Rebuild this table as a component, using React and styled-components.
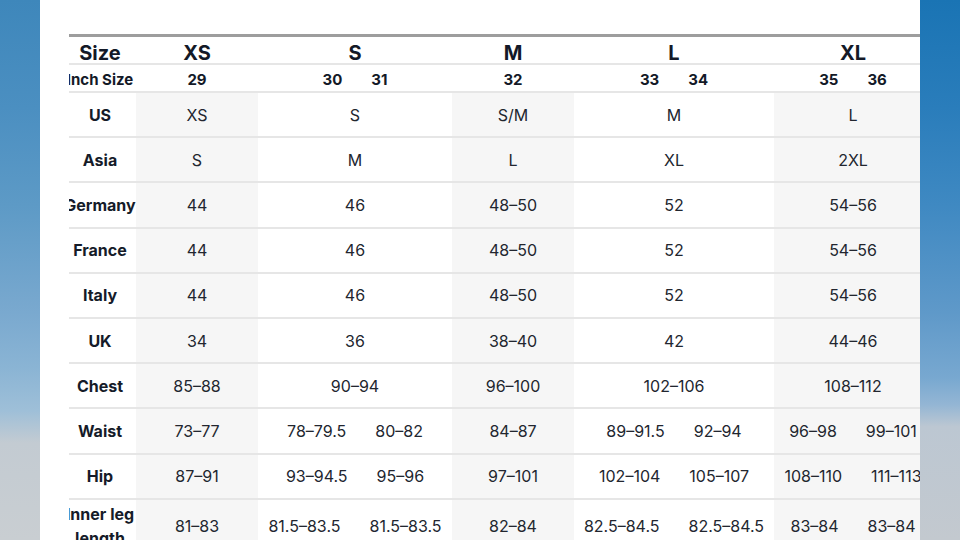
import React from 'react';
import styled, { createGlobalStyle } from 'styled-components';

const Global = createGlobalStyle`
  html, body { margin: 0; padding: 0; }
  body {
    width: 960px;
    height: 540px;
    overflow: hidden;
    font-family: Inter, "Noto Sans", "Liberation Sans", sans-serif;
  }
`;

const Page = styled.div`
  display: flex;
  width: 960px;
  height: 540px;
  overflow: hidden;
`;

const skies = {
  left: `linear-gradient(180deg, #3e87bb 0%, #4b8fc1 20%, #5d9ac6 38%, #7aa9cf 58%, #8ab4d4 68%, #9ebfd8 76%, #c3cbd2 82%, #c9ced2 100%)`,
  right: `linear-gradient(180deg, #1a74b4 0%, #2a7dbb 20%, #3f89c2 38%, #5f99c9 58%, #78a8d0 70%, #94b6d4 75%, #bcc7d2 79%, #c3c9cf 100%)`,
};

const Sky = styled.div`
  flex: 0 0 40px;
  background: ${(p) => skies[p.$side]};
`;

const Panel = styled.div`
  flex: 0 0 880px;
  box-sizing: border-box;
  background: #ffffff;
  padding: 34px 0 0 29px;
  overflow: hidden;
`;

const TableClip = styled.div`
  overflow: hidden;
`;

const Table = styled.div`
  display: grid;
  grid-template-columns: 72px 122px 194px 122px 200px 158px;
  width: max-content;
  margin-left: -5px;
  border-top: 3px solid #9d9d9d;
`;

const Cell = styled.div`
  box-sizing: border-box;
  height: ${(p) => p.$h}px;
  display: flex;
  align-items: center;
  justify-content: center;
  gap: 29px;
  border-bottom: 2px solid #e6e6e6;
  background: ${(p) => (p.$shade ? '#f6f6f6' : '#ffffff')};
  white-space: nowrap;
  text-align: center;
`;

const HeadCell = styled(Cell)`
  padding-top: 6px;
  font-size: 20px;
  font-weight: 700;
  color: #131927;
`;

const InchCell = styled(Cell)`
  padding-top: 2px;
  font-size: 15px;
  font-weight: 700;
  color: #131927;
`;

const LabelCell = styled(Cell)`
  font-size: 16px;
  font-weight: 700;
  color: #151b29;
  white-space: ${(p) => (p.$wrap ? 'normal' : 'nowrap')};
  line-height: 24px;
`;

const ValueCell = styled(Cell)`
  font-size: 16px;
  font-weight: 400;
  color: #22262f;
`;

const headers = ['Size', 'XS', 'S', 'M', 'L', 'XL'];
const inch = [['29'], ['30', '31'], ['32'], ['33', '34'], ['35', '36']];

const rows = [
  { label: 'US', cells: [['XS'], ['S'], ['S/M'], ['M'], ['L']] },
  { label: 'Asia', cells: [['S'], ['M'], ['L'], ['XL'], ['2XL']] },
  { label: 'Germany', cells: [['44'], ['46'], ['48–50'], ['52'], ['54–56']] },
  { label: 'France', cells: [['44'], ['46'], ['48–50'], ['52'], ['54–56']] },
  { label: 'Italy', cells: [['44'], ['46'], ['48–50'], ['52'], ['54–56']] },
  { label: 'UK', cells: [['34'], ['36'], ['38–40'], ['42'], ['44–46']] },
  { label: 'Chest', cells: [['85–88'], ['90–94'], ['96–100'], ['102–106'], ['108–112']] },
  { label: 'Waist', cells: [['73–77'], ['78–79.5', '80–82'], ['84–87'], ['89–91.5', '92–94'], ['96–98', '99–101']] },
  { label: 'Hip', cells: [['87–91'], ['93–94.5', '95–96'], ['97–101'], ['102–104', '105–107'], ['108–110', '111–113']] },
  { label: 'Inner leg length', wrap: true, tall: true, cells: [['81–83'], ['81.5–83.5', '81.5–83.5'], ['82–84'], ['82.5–84.5', '82.5–84.5'], ['83–84', '83–84']] },
];

export default function App() {
  return (
    <>
      <Global />
      <Page>
        <Sky $side="left" />
        <Panel>
          <TableClip>
            <Table>
              {headers.map((h) => (
                <HeadCell key={h} $h={28}>{h}</HeadCell>
              ))}
              <InchCell $h={28}>Inch Size</InchCell>
              {inch.map((vals, i) => (
                <InchCell key={i} $h={28}>
                  {vals.map((v) => (
                    <span key={v}>{v}</span>
                  ))}
                </InchCell>
              ))}
              {rows.map((r) => (
                <React.Fragment key={r.label}>
                  <LabelCell $h={r.tall ? 54 : 45.2} $wrap={r.wrap}>
                    {r.label}
                  </LabelCell>
                  {r.cells.map((vals, i) => (
                    <ValueCell key={i} $h={r.tall ? 54 : 45.2} $shade={i % 2 === 0}>
                      {vals.map((v, j) => (
                        <span key={j}>{v}</span>
                      ))}
                    </ValueCell>
                  ))}
                </React.Fragment>
              ))}
            </Table>
          </TableClip>
        </Panel>
        <Sky $side="right" />
      </Page>
    </>
  );
}
